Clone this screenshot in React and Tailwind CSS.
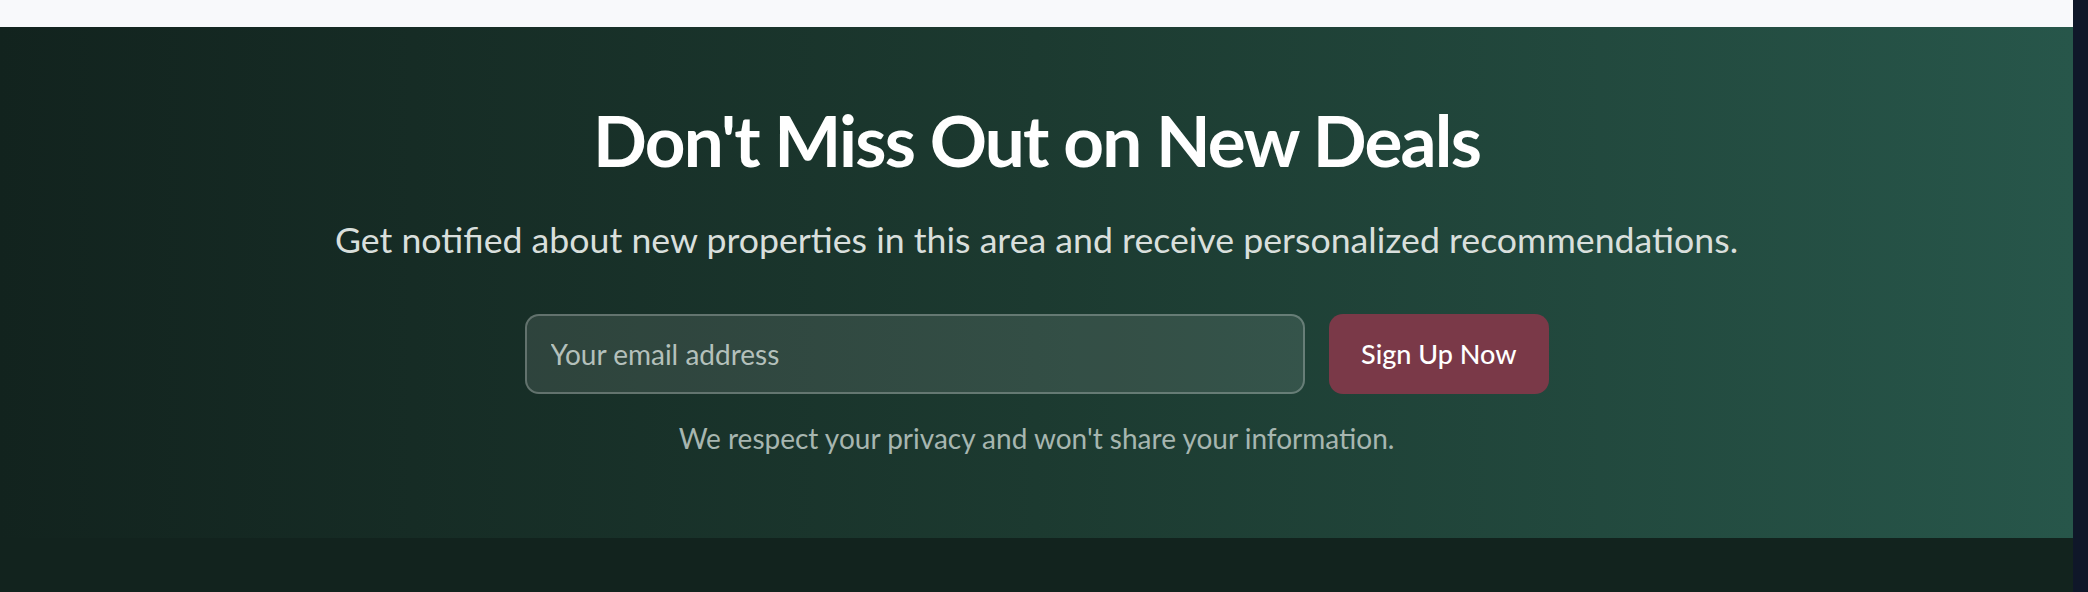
export default function App() {
  return (
    <div className="flex min-h-[592px] w-full bg-[#12231e]" style={{ fontFamily: 'Lato, "Open Sans", sans-serif' }}>
      <div className="flex flex-1 flex-col">
        {/* page above */}
        <div className="h-[27px] bg-[#f8f9fb]" />

        {/* Newsletter */}
        <section className="bg-gradient-to-r from-[#12231e] via-[#1c3a30] to-[#27564a] px-8 pt-[73px] pb-[80px] text-center">
          <h2 className="text-[71px] leading-[80px] font-bold tracking-tight text-white">
            Don't Miss Out on New Deals
          </h2>
          <p className="mt-[36px] text-[35.7px] leading-[48px] text-[#d9dfdc]">
            Get notified about new properties in this area and receive personalized recommendations.
          </p>

          <form className="mx-auto mt-[50px] flex max-w-[1024px] gap-6" onSubmit={(e) => e.preventDefault()}>
            <input
              type="email"
              placeholder="Your email address"
              className="h-[80px] flex-1 rounded-[14px] border-2 border-white/25 bg-white/10 px-6 text-[28px] text-white placeholder:text-[#b4c0bb] outline-none"
            />
            <button
              type="submit"
              className="h-[80px] rounded-[14px] bg-[#7a3948] px-8 text-[27px] font-medium text-white"
            >
              Sign Up Now
            </button>
          </form>

          <p className="mt-[24px] text-[28px] leading-[40px] text-[#a7b6b0]">
            We respect your privacy and won't share your information.
          </p>
        </section>

        <div className="flex-1 bg-[#12231e]" />
      </div>
      <div className="w-[15px] shrink-0 bg-[#0f1729]" />
    </div>
  );
}
